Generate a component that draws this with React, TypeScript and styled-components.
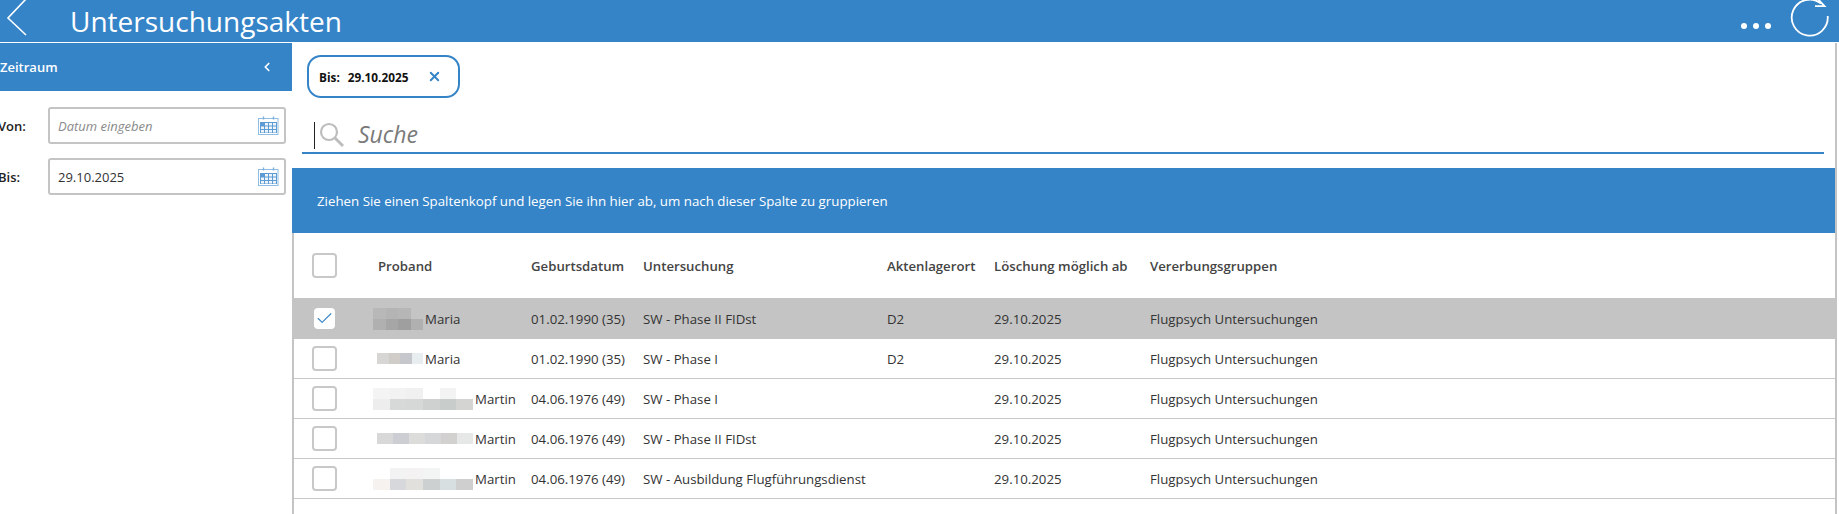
import { createGlobalStyle, styled } from "styled-components";
import { Check, ChevronLeft, X } from "lucide-react";

const BLUE = "#3584c8";
const FONT = '"Open Sans", "Noto Sans", sans-serif';

const Global = createGlobalStyle`
  html, body {
    margin: 0;
    padding: 0;
    background: #fff;
    overflow: hidden;
  }
  body {
    font-family: ${FONT};
    color: #333;
  }
`;

type Person = {
  name: string;
  birth: string;
  exam: string;
  place: string;
  selected?: boolean;
  blurWidth: number;
  blurInset: number;
  blur: string[][];
};

const rows: Person[] = [
  {
    name: "Maria",
    birth: "01.02.1990 (35)",
    exam: "SW - Phase II FIDst",
    place: "D2",
    selected: true,
    blurWidth: 50,
    blurInset: 0,
    blur: [
      ["#b8b8b8", "#b4b4b4", "#b6b6b6", "#c4c4c4"],
      ["#b0b0b0", "#a6a6a6", "#9f9f9f", "#b0b0b0"],
    ],
  },
  {
    name: "Maria",
    birth: "01.02.1990 (35)",
    exam: "SW - Phase I",
    place: "D2",
    blurWidth: 46,
    blurInset: 4,
    blur: [["#d8d6d4", "#d0cdc9", "#c6c7cc", "#e8eef0"]],
  },
  {
    name: "Martin",
    birth: "04.06.1976 (49)",
    exam: "SW - Phase I",
    place: "",
    blurWidth: 100,
    blurInset: 0,
    blur: [
      ["#f4f4f4", "#f2f2f2", "#f0f0f0", "#fff", "#f3f3f3", "#fff"],
      ["#ededed", "#d7d9d9", "#d5d8d6", "#cfd1d1", "#c8cdcc", "#d4d4d2"],
    ],
  },
  {
    name: "Martin",
    birth: "04.06.1976 (49)",
    exam: "SW - Phase II FIDst",
    place: "",
    blurWidth: 96,
    blurInset: 4,
    blur: [["#d8d8d8", "#cdced3", "#dcdcda", "#d6d7d8", "#d3d1cf", "#e6e8e8"]],
  },
  {
    name: "Martin",
    birth: "04.06.1976 (49)",
    exam: "SW - Ausbildung Flugführungsdienst",
    place: "",
    blurWidth: 100,
    blurInset: 0,
    blur: [
      ["#fff", "#f3f3f3", "#f4f2f2", "#f3f5f5", "#fff", "#fff"],
      ["#f6f2f0", "#d6d8dc", "#e2e0dc", "#ccd0d0", "#d8dfe0", "#cfcfcf"],
    ],
  },
];

const columns = ["Proband", "Geburtsdatum", "Untersuchung", "Aktenlagerort", "Löschung möglich ab", "Vererbungsgruppen"];

const CalendarIcon = () => (
  <svg width="21" height="20" viewBox="0 0 21 20">
    <rect x="0.5" y="2.5" width="19.5" height="16" fill="#fff" stroke="#8fbce4" />
    <path d="M5.5 0.5v3M15.5 0.5v3" stroke="#7fb0dc" strokeWidth="1.4" />
    <rect x="2" y="6" width="17" height="11" fill="#5e9bd3" />
    {[7, 10.5, 14].map((y, r) =>
      [3, 7, 11, 15].map((x, c) =>
        r === 0 && c === 0 ? null : <rect key={`${x}-${y}`} x={x} y={y} width="3" height="2.5" fill="#eef5fb" />
      )
    )}
  </svg>
);

const App = () => {
  return (
    <Page>
      <Global />
      <TopBar>
        <BackIcon width="30" height="42" viewBox="0 0 30 42">
          <path d="M26 -1 L8 18 L26 35" fill="none" stroke="#fff" strokeWidth="1.6" />
        </BackIcon>
        <Title>Untersuchungsakten</Title>
        <Dots>
          <span />
          <span />
          <span />
        </Dots>
        <RefreshIcon width="40" height="42" viewBox="0 0 40 42">
          <path d="M38.7 16 A18 18 0 1 1 32 3.5" fill="none" stroke="#fff" strokeWidth="1.8" />
          <path d="M26 6.2 L35.5 6.2 L28 -2" fill="none" stroke="#fff" strokeWidth="1.8" />
        </RefreshIcon>
      </TopBar>

      <Body>
        <Sidebar>
          <SideHead>
            <span>Zeitraum</span>
            <ChevronLeft size={14} strokeWidth={3} color="#fff" />
          </SideHead>
          <DateRow>
            <DateLabel>Von:</DateLabel>
            <DateBox>
              <DateText $empty>Datum eingeben</DateText>
              <CalendarIcon />
            </DateBox>
          </DateRow>
          <DateRow>
            <DateLabel>Bis:</DateLabel>
            <DateBox>
              <DateText>29.10.2025</DateText>
              <CalendarIcon />
            </DateBox>
          </DateRow>
        </Sidebar>

        <Main>
          <Chip>
            <ChipKey>Bis:</ChipKey>
            <ChipKey>29.10.2025</ChipKey>
            <X size={15} strokeWidth={3} color={BLUE} />
          </Chip>

          <SearchBar>
            <Caret />
            <svg width="26" height="26" viewBox="0 0 26 26">
              <circle cx="10" cy="10" r="8" fill="none" stroke="#bdbdbd" strokeWidth="2.2" />
              <path d="M16 16 L24 24" stroke="#bdbdbd" strokeWidth="3" />
            </svg>
            <SearchText>Suche</SearchText>
          </SearchBar>

          <GroupBanner>Ziehen Sie einen Spaltenkopf und legen Sie ihn hier ab, um nach dieser Spalte zu gruppieren</GroupBanner>

          <Grid>
            <HeadRow>
              <CheckCell>
                <CheckBox />
              </CheckCell>
              {columns.map((c, i) => (
                <HeadCell key={c} $first={i === 0}>
                  {c}
                </HeadCell>
              ))}
            </HeadRow>

            {rows.map((r, i) => (
              <DataRow key={i} $selected={r.selected}>
                <CheckCell>
                  {r.selected ? (
                    <CheckBox $checked>
                      <Check size={19} strokeWidth={1.4} color={BLUE} />
                    </CheckBox>
                  ) : (
                    <CheckBox />
                  )}
                </CheckCell>
                <NameCell>
                  <Blur $width={r.blurWidth} $inset={r.blurInset}>
                    {r.blur.map((line, a) => (
                      <BlurLine key={a}>
                        {line.map((color, b) => (
                          <BlurCell key={b} $color={color} />
                        ))}
                      </BlurLine>
                    ))}
                  </Blur>
                  {r.name}
                </NameCell>
                <Cell>{r.birth}</Cell>
                <Cell>{r.exam}</Cell>
                <Cell>{r.place}</Cell>
                <Cell>29.10.2025</Cell>
                <Cell>Flugpsych Untersuchungen</Cell>
              </DataRow>
            ))}
          </Grid>
        </Main>
      </Body>
    </Page>
  );
};

export default App;

const Page = styled.div`
  width: 1839px;
  height: 514px;
  overflow: hidden;
  display: flex;
  flex-direction: column;
`;

const TopBar = styled.header`
  height: 42px;
  flex-shrink: 0;
  background: ${BLUE};
  display: flex;
  align-items: center;
  overflow: hidden;
  border-bottom: 1px solid #fff;
`;

const BackIcon = styled.svg`
  flex-shrink: 0;
`;

const Title = styled.h1`
  margin: 0 0 0 40px;
  flex: 1;
  font-size: 28px;
  font-weight: 400;
  line-height: 32px;
  color: #fff;
`;

const Dots = styled.div`
  display: flex;
  gap: 6px;
  margin: 10px 18px 0 0;

  span {
    width: 6px;
    height: 6px;
    border-radius: 50%;
    background: #fff;
  }
`;

const RefreshIcon = styled.svg`
  flex-shrink: 0;
  margin-right: 10px;
`;

const Body = styled.div`
  flex: 1;
  min-height: 0;
  display: flex;
`;

const Sidebar = styled.aside`
  width: 292px;
  flex-shrink: 0;
  overflow: hidden;
  display: flex;
  flex-direction: column;
`;

const SideHead = styled.div`
  height: 48px;
  margin-bottom: 16px;
  padding-right: 18px;
  background: ${BLUE};
  color: #fff;
  font-size: 13px;
  font-weight: 600;
  display: flex;
  align-items: center;
  justify-content: space-between;
`;

const DateRow = styled.div`
  display: flex;
  align-items: center;
  margin-bottom: 14px;
`;

const DateLabel = styled.span`
  width: 48px;
  margin-left: -2px;
  padding-right: 2px;
  font-size: 13px;
  font-weight: 600;
  color: #222;
`;

const DateBox = styled.div`
  width: 238px;
  height: 37px;
  box-sizing: border-box;
  border: 2px solid #c4c4c4;
  border-radius: 3px;
  padding: 0 5px 0 8px;
  display: flex;
  align-items: center;
  justify-content: space-between;
`;

const DateText = styled.span<{ $empty?: boolean }>`
  font-size: 13px;
  font-style: ${(p) => (p.$empty ? "italic" : "normal")};
  color: ${(p) => (p.$empty ? "#8a8a8a" : "#333")};
`;

const Main = styled.main`
  flex: 1;
  min-width: 0;
  display: flex;
  flex-direction: column;
  border-right: 2px solid #c4c4c4;
  margin-right: 2px;
`;

const Chip = styled.div`
  width: 153px;
  height: 43px;
  box-sizing: border-box;
  margin: 12px 0 0 15px;
  border: 2px solid ${BLUE};
  border-radius: 14px;
  padding-left: 10px;
  display: flex;
  align-items: center;
  gap: 8px;

  svg {
    margin-left: 11px;
  }
`;

const ChipKey = styled.span`
  font-size: 11.8px;
  font-weight: 700;
  color: #111;
`;

const SearchBar = styled.div`
  height: 34px;
  margin: 20px 11px 14px 10px;
  border-bottom: 2px solid ${BLUE};
  display: flex;
  align-items: center;
  padding-left: 12px;

  svg {
    margin: 0 13px 0 4px;
  }
`;

const Caret = styled.span`
  width: 1px;
  height: 27px;
  background: #222;
`;

const SearchText = styled.span`
  margin-bottom: 3px;
  font-size: 23px;
  font-style: italic;
  color: #7a7a7a;
`;

const GroupBanner = styled.div`
  height: 65px;
  flex-shrink: 0;
  padding-left: 25px;
  background: ${BLUE};
  color: #fff;
  font-size: 13.3px;
  display: flex;
  align-items: center;
`;

const Grid = styled.section`
  flex: 1;
  border-left: 2px solid #c4c4c4;
`;

const rowColumns = "79px 158px 112px 244px 107px 156px 1fr";

const HeadRow = styled.div`
  height: 65px;
  display: grid;
  grid-template-columns: ${rowColumns};
  align-items: center;
`;

const HeadCell = styled.div<{ $first?: boolean }>`
  padding-left: ${(p) => (p.$first ? "5px" : "0")};
  font-size: 13.2px;
  font-weight: 600;
  color: #444;
  white-space: nowrap;
`;

const DataRow = styled.div<{ $selected?: boolean }>`
  height: ${(p) => (p.$selected ? "41px" : "40px")};
  box-sizing: border-box;
  display: grid;
  grid-template-columns: ${rowColumns};
  align-items: center;
  background: ${(p) => (p.$selected ? "#c4c4c4" : "#fff")};
  border-bottom: ${(p) => (p.$selected ? "none" : "1px solid #c8c8c8")};
`;

const Cell = styled.div`
  font-size: 13.25px;
  color: #333;
  white-space: nowrap;
`;

const NameCell = styled(Cell)`
  display: flex;
  align-items: center;
  gap: 2px;
`;

const CheckCell = styled.div`
  padding-left: 18px;
  display: flex;
  align-items: center;
`;

const CheckBox = styled.div<{ $checked?: boolean }>`
  width: ${(p) => (p.$checked ? "21px" : "25px")};
  height: ${(p) => (p.$checked ? "21px" : "25px")};
  margin-left: ${(p) => (p.$checked ? "2px" : "0")};
  box-sizing: border-box;
  border: ${(p) => (p.$checked ? "none" : "2px solid #c8c8c8")};
  border-radius: 4px;
  background: #fff;
  display: flex;
  align-items: center;
  justify-content: center;
`;

const Blur = styled.div<{ $width: number; $inset: number }>`
  width: ${(p) => p.$width}px;
  margin-left: ${(p) => p.$inset}px;
  display: flex;
  flex-direction: column;
`;

const BlurLine = styled.div`
  display: flex;
`;

const BlurCell = styled.span<{ $color: string }>`
  flex: 1;
  height: 11px;
  background: ${(p) => p.$color};
`;
